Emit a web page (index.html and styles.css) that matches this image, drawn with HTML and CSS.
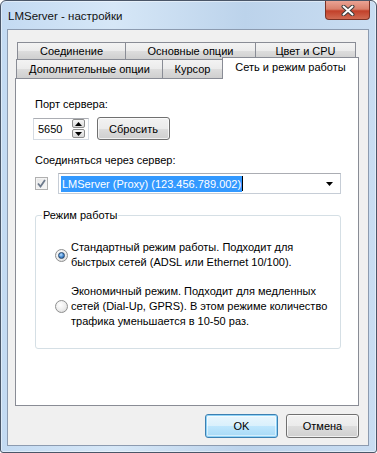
FILE: index.html
```html
<!DOCTYPE html>
<html lang="ru">
<head>
    <meta charset="UTF-8">
    <title>LMServer - настройки</title>
    <link rel="stylesheet" href="styles.css">
</head>
<body>
    <div class="window">
        <div class="titlebar">
            <span class="title">LMServer - настройки</span>
            <div class="close-btn">
                <svg width="14" height="11" viewBox="0 0 14 11">
                    <path d="M2.5 1.5 L11.5 9.5 M11.5 1.5 L2.5 9.5" stroke="#3b3b3b" stroke-width="4" stroke-linecap="round"/>
                    <path d="M2.5 1.5 L11.5 9.5 M11.5 1.5 L2.5 9.5" stroke="#ffffff" stroke-width="2" stroke-linecap="round"/>
                </svg>
            </div>
        </div>
        <div class="client">
            <!-- tab headers ================================================ -->
            <div class="tabs">
                <div class="tab-row row-back">
                    <div class="tab w-conn">Соединение</div>
                    <div class="tab w-main">Основные опции</div>
                    <div class="tab w-color">Цвет и CPU</div>
                </div>
                <div class="tab-row row-front">
                    <div class="tab w-extra">Дополнительные опции</div>
                    <div class="tab w-cursor">Курсор</div>
                    <div class="tab tab-active w-net">Сеть и режим работы</div>
                </div>
            </div>
            <!-- tab page ==================================================== -->
            <div class="tab-page">
                <div class="field-label label-port">Порт сервера:</div>
                <div class="port-row">
                    <div class="spin">
                        <span class="spin-value">5650</span>
                        <div class="spin-arrows">
                            <span class="spin-btn"><svg width="7" height="4" viewBox="0 0 7 4"><path d="M0 4 L3.5 0 L7 4 Z" fill="#000"/></svg></span>
                            <span class="spin-btn"><svg width="7" height="4" viewBox="0 0 7 4"><path d="M0 0 L7 0 L3.5 4 Z" fill="#000"/></svg></span>
                        </div>
                    </div>
                    <div class="btn btn-reset">Сбросить</div>
                </div>
                <div class="field-label label-server">Соединяться через сервер:</div>
                <div class="server-row">
                    <span class="checkbox">
                        <svg width="9" height="9" viewBox="0 0 9 9">
                            <path d="M1 4.5 L3.5 7.5 L8 1" stroke="#6d7a8c" stroke-width="1.8" fill="none"/>
                        </svg>
                    </span>
                    <div class="combo">
                        <span class="combo-text">LMServer (Proxy) (123.456.789.002)</span>
                        <span class="caret"></span>
                        <svg class="combo-arrow" width="7" height="4" viewBox="0 0 7 4"><path d="M0 0 L7 0 L3.5 4 Z" fill="#000"/></svg>
                    </div>
                </div>
                <fieldset class="group">
                    <legend>Режим работы</legend>
                    <div class="radio-row row-standard">
                        <span class="radio checked"><span class="radio-dot"></span></span>
                        <span class="radio-text">Стандартный режим работы. Подходит для<br>быстрых сетей (ADSL или Ethernet 10/100).</span>
                    </div>
                    <div class="radio-row row-economy">
                        <span class="radio"></span>
                        <span class="radio-text">Экономичный режим. Подходит для медленных<br>сетей (Dial-Up, GPRS). В этом режиме количество<br>трафика уменьшается в 10-50 раз.</span>
                    </div>
                </fieldset>
            </div>
            <!-- dialog buttons ============================================== -->
            <div class="buttons">
                <div class="btn btn-default">OK</div>
                <div class="btn">Отмена</div>
            </div>
        </div>
    </div>
</body>
</html>
```

FILE: styles.css
```css
body {
    margin: 0;
    font-family: "Liberation Sans", Arial, sans-serif;
    font-size: 11px;
    color: #000;
    background: #ffffff;
}

/* window frame ==================================================== */

.window {
    width: 377px;
    height: 453px;
    box-sizing: border-box;
    border: 1px solid #4a5668;
    border-radius: 6px 6px 3px 3px;
    background: linear-gradient(to right, #c3daf2 0%, #d6e7f7 30%, #bcd3eb 65%, #c9ddf2 100%);
    display: flex;
    flex-direction: column;
    box-shadow: inset 0 0 0 1px rgba(255, 255, 255, 0.45);
}

.titlebar {
    height: 28px;
    display: flex;
    justify-content: space-between;
    align-items: flex-start;
}

.title {
    margin-left: 7px;
    margin-top: 8px;
    line-height: 15px;
    font-size: 11.5px;
    color: #111;
}

.close-btn {
    width: 45px;
    height: 19px;
    margin-right: 6px;
    box-sizing: border-box;
    border: 1px solid #7a3226;
    border-top: none;
    border-radius: 0 0 4px 4px;
    background: linear-gradient(#eaa394 0%, #d9806c 45%, #c2402a 55%, #d06a52 100%);
    display: flex;
    align-items: center;
    justify-content: center;
}

.client {
    height: 417px;
    margin: 0 7px 0 6px;
    box-sizing: border-box;
    border: 1px solid #8c9bb0;
    background: #f0f0f0;
    padding: 12px 9px 7px 7px;
    display: flex;
    flex-direction: column;
}

/* tabs ============================================================ */

.tabs {
    height: 36px;
    display: flex;
    flex-direction: column;
}

.tab-row {
    display: flex;
}

.row-back {
    height: 17px;
    margin-left: 2px;
}

.row-front {
    height: 19px;
    margin-left: 1px;
}

.tab {
    box-sizing: border-box;
    border: 1px solid #898c95;
    border-bottom: none;
    background: linear-gradient(#f3f3f3 0%, #ebebeb 50%, #dddddd 51%, #cfcfcf 100%);
    display: flex;
    align-items: center;
    justify-content: center;
    line-height: 15px;
}

.tab + .tab {
    margin-left: -1px;
}

.row-back .tab {
    height: 17px;
}

.row-front .tab {
    height: 19px;
}

.w-conn { width: 109px; }
.w-main { width: 131px; }
.w-color { width: 101px; }
.w-extra { width: 147px; }
.w-cursor { width: 61px; }
.w-net { width: 137px; }

.row-front .tab-active {
    height: 22px;
    margin-top: -2px;
    background: #ffffff;
    position: relative;
    z-index: 1;
    padding-bottom: 2px;
}

.tab-page {
    height: 328px;
    box-sizing: border-box;
    border: 1px solid #898c95;
    background: #ffffff;
    padding-left: 17px;
}

/* page content ==================================================== */

.field-label {
    line-height: 15px;
    padding-left: 2px;
}

.label-port {
    margin-top: 18px;
}

.label-server {
    margin-top: 13px;
}

.port-row {
    margin-top: 5px;
    display: flex;
    align-items: center;
}

.spin {
    width: 56px;
    height: 22px;
    box-sizing: border-box;
    border: 1px solid #d5dbe3;
    border-top-color: #abadb3;
    background: #ffffff;
    display: flex;
    align-items: center;
    padding-left: 4px;
}

.spin-value {
    flex: 1;
}

.spin-arrows {
    width: 13px;
    margin-right: 3px;
    display: flex;
    flex-direction: column;
    gap: 1px;
}

.spin-btn {
    height: 9px;
    box-sizing: border-box;
    border: 1px solid #8d8d8d;
    border-radius: 2px;
    background: linear-gradient(#f6f6f6, #dadada);
    display: flex;
    align-items: center;
    justify-content: center;
}

.btn {
    width: 73px;
    height: 23px;
    box-sizing: border-box;
    border: 1px solid #707070;
    border-radius: 3px;
    background: linear-gradient(#f2f2f2 0%, #ebebeb 50%, #dddddd 51%, #cfcfcf 100%);
    box-shadow: inset 0 0 0 1px rgba(255, 255, 255, 0.7);
    display: flex;
    align-items: center;
    justify-content: center;
}

.btn-reset {
    margin-left: 8px;
}

.server-row {
    margin-top: 5px;
    display: flex;
    align-items: center;
}

.checkbox {
    width: 13px;
    height: 13px;
    margin-left: 2px;
    box-sizing: border-box;
    border: 1px solid #b0b0b0;
    background: linear-gradient(135deg, #e6e6e6, #f8f8f8);
    box-shadow: inset 0 0 0 1px #f4f4f4;
    display: flex;
    align-items: center;
    justify-content: center;
}

.combo {
    width: 283px;
    height: 21px;
    margin-left: 10px;
    box-sizing: border-box;
    border: 1px solid #c6cdd6;
    border-top-color: #abadb3;
    background: #ffffff;
    display: flex;
    align-items: center;
    padding-left: 2px;
    padding-right: 7px;
}

.combo-text {
    background: #3399ff;
    color: #ffffff;
    line-height: 16px;
    padding: 0 1px;
}

.caret {
    width: 1px;
    height: 15px;
    background: #000;
}

.combo-arrow {
    margin-left: auto;
}

/* group box ======================================================= */

.group {
    width: 306px;
    margin: 14px 0 0 2px;
    box-sizing: border-box;
    border: 1px solid #d5dfe5;
    border-radius: 3px;
    padding: 17px 8px 19px 19px;
}

.group legend {
    padding: 0 1px;
    margin-left: -13px;
    line-height: 15px;
}

.radio-row {
    display: flex;
    align-items: center;
    line-height: 15px;
}

.row-economy {
    margin-top: 14px;
}

.radio {
    width: 13px;
    height: 13px;
    box-sizing: border-box;
    border: 1px solid #8e8f8f;
    border-radius: 50%;
    background: radial-gradient(circle at 40% 35%, #ffffff 0%, #ececec 55%, #d0d0d0 100%);
    display: flex;
    align-items: center;
    justify-content: center;
    flex-shrink: 0;
}

.radio-dot {
    width: 7px;
    height: 7px;
    box-sizing: border-box;
    border-radius: 50%;
    border: 1px solid #26476d;
    background: radial-gradient(circle at 40% 35%, #bfe1ff 0%, #4a8fd6 50%, #1c4f8a 100%);
}

.radio-text {
    margin-left: 3px;
    white-space: nowrap;
}

/* dialog buttons ================================================== */

.buttons {
    margin-top: 8px;
    display: flex;
    justify-content: flex-end;
    gap: 8px;
}

.buttons .btn {
    height: 24px;
}

.btn-default {
    border-color: #3c7fb1;
    background: linear-gradient(#eaf6fd 0%, #d9f0fc 50%, #bee6fd 51%, #a7d9f5 100%);
    box-shadow: inset 0 0 0 1px #8fd3f7, inset 0 0 0 2px rgba(255, 255, 255, 0.5);
}
```
